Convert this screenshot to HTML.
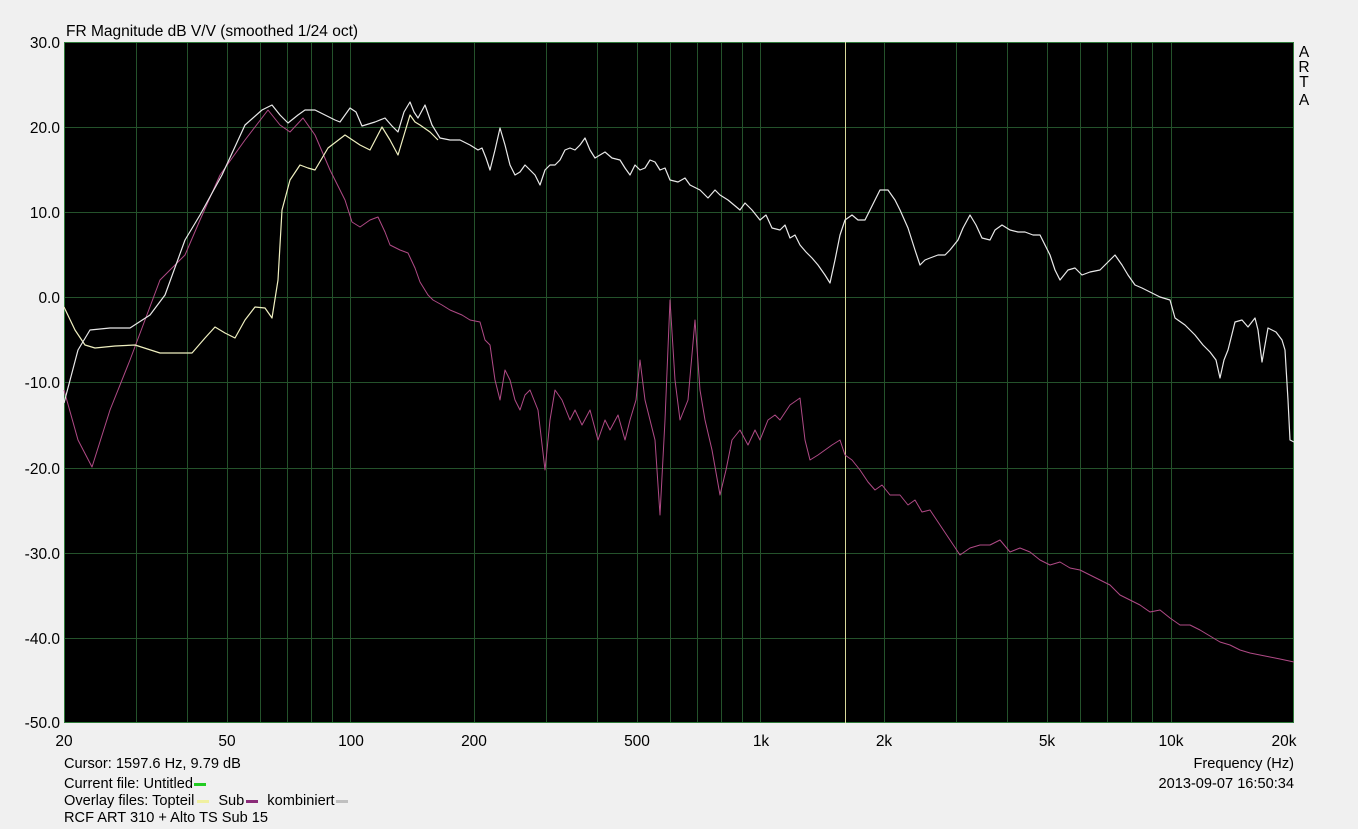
<!DOCTYPE html>
<html><head><meta charset="utf-8"><style>
body{margin:0;background:#f0f0f0;width:1358px;height:829px;overflow:hidden;font-family:"Liberation Sans",sans-serif;}
svg{position:absolute;left:0;top:0}
text{font-family:"Liberation Sans",sans-serif;font-size:15.5px;fill:#000}
.lg{position:absolute;left:64px;font-size:14.6px;line-height:17px;white-space:nowrap;color:#000}
.sw{display:inline-block;width:12px;height:3px;vertical-align:middle;margin:0 2px 0 1px}
</style></head><body>
<svg width="1358" height="829" viewBox="0 0 1358 829">
<rect x="64" y="42" width="1230" height="681" fill="#000"/>
<g stroke="#24522b" stroke-width="1">
<path d="M136.5 42V723M187.5 42V723M227.5 42V723M260.5 42V723M287.5 42V723M311.5 42V723M332.5 42V723M350.5 42V723M474.5 42V723M546.5 42V723M597.5 42V723M637.5 42V723M670.5 42V723M697.5 42V723M721.5 42V723M742.5 42V723M760.5 42V723M884.5 42V723M956.5 42V723M1007.5 42V723M1047.5 42V723M1080.5 42V723M1107.5 42V723M1131.5 42V723M1152.5 42V723M1171.5 42V723"/>
<path d="M64 127.5H1294M64 212.5H1294M64 297.5H1294M64 382.5H1294M64 468.5H1294M64 553.5H1294M64 638.5H1294"/>
</g>
<rect x="64.5" y="42.5" width="1229" height="680" fill="none" stroke="#2f7a3a"/>
<line x1="845.5" y1="42" x2="845.5" y2="723" stroke="#d8d89a"/>
<g fill="none" stroke-width="1" stroke-linejoin="round">
<polyline stroke="#b04a86" points="64,390 78,440 92,467 110,410 130,360 145,320 160,280 175,265 185,255 200,220 220,175 245,140 268,110 280,125 290,132 303,118 315,135 330,170 345,200 352,222 360,227 370,220 378,217 385,232 390,245 400,250 408,253 415,268 420,282 428,295 433,300 442,305 450,310 462,315 470,320 480,322 485,340 490,345 495,380 500,400 505,370 510,380 515,400 520,410 525,395 530,390 538,410 545,470 550,420 555,390 562,400 570,420 575,410 582,425 590,410 598,440 605,420 610,430 618,415 625,440 630,420 636,400 640,360 645,400 650,420 655,440 660,515 665,420 670,300 675,380 680,420 688,400 695,320 700,390 705,420 712,450 720,495 726,470 732,440 740,430 748,445 755,430 760,440 768,420 775,415 780,420 790,405 800,398 805,440 810,460 818,455 825,450 832,445 840,440 845,455 852,460 860,470 868,482 875,490 882,485 890,495 900,495 908,505 915,500 922,512 930,510 940,525 950,540 960,555 970,548 980,545 990,545 1000,540 1010,552 1020,548 1030,552 1040,560 1050,565 1060,562 1070,568 1080,570 1090,575 1100,580 1110,585 1120,595 1130,600 1140,605 1150,612 1160,610 1170,618 1180,625 1190,625 1200,630 1210,636 1220,642 1230,645 1240,650 1250,653 1260,655 1270,657 1280,659 1294,662"/>
<polyline stroke="#f0f0c0" stroke-width="1.2" points="64,307 75,330 85,345 95,348 115,346 135,345 160,353 192,353 205,338 215,327 225,333 235,338 245,320 255,307 265,308 272,318 278,280 282,210 290,180 300,165 308,168 315,170 328,148 345,135 360,145 370,150 382,127 390,140 398,155 404,135 410,115 415,122 420,125 430,132 438,140"/>
<polyline stroke="#e8e8e8" stroke-width="1.2" points="64,403 78,350 90,330 110,328 130,328 150,315 165,295 185,240 200,215 222,175 245,125 262,110 272,105 280,115 288,123 298,115 305,110 315,110 325,115 335,120 340,122 350,108 356,112 362,126 375,122 385,118 392,126 398,132 404,112 410,102 414,112 418,118 425,105 432,125 440,138 450,140 460,140 470,145 478,150 482,148 486,158 490,170 495,150 500,128 505,145 510,165 515,175 520,172 525,165 530,170 535,175 540,185 545,170 550,165 555,165 560,160 565,150 570,148 575,150 580,145 585,138 590,150 595,158 600,155 605,152 612,158 620,160 625,168 630,175 635,165 640,170 645,168 650,160 655,162 660,170 665,168 670,180 678,182 685,178 690,185 700,190 708,198 715,190 720,195 728,200 734,205 740,210 745,203 752,210 760,220 766,215 772,228 780,230 785,225 790,238 795,235 800,245 806,252 812,258 818,265 825,275 830,283 835,260 840,235 845,220 852,215 858,220 865,220 870,210 875,200 880,190 888,190 895,200 900,210 908,228 915,250 920,265 925,260 930,258 938,255 945,255 950,250 958,240 963,228 970,215 976,225 982,238 990,240 995,230 1002,225 1010,230 1018,232 1025,232 1033,235 1040,235 1045,245 1050,255 1055,270 1060,280 1068,270 1075,268 1082,275 1090,272 1100,270 1108,262 1115,255 1122,265 1128,275 1135,285 1142,288 1150,292 1160,297 1170,300 1175,318 1185,325 1195,335 1203,345 1210,352 1216,360 1220,378 1224,360 1228,350 1235,322 1242,320 1248,327 1255,318 1258,330 1262,362 1268,328 1276,332 1282,340 1285,350 1288,400 1290,440 1294,442"/>
</g>
<text x="66" y="36">FR Magnitude dB V/V (smoothed 1/24 oct)</text>
<g text-anchor="end">
<text x="60" y="48">30.0</text><text x="60" y="133">20.0</text><text x="60" y="218">10.0</text><text x="60" y="303">0.0</text><text x="60" y="388">-10.0</text><text x="60" y="474">-20.0</text><text x="60" y="559">-30.0</text><text x="60" y="644">-40.0</text><text x="60" y="728">-50.0</text>
</g>
<g text-anchor="middle">
<text x="64" y="746">20</text><text x="227" y="746">50</text><text x="351" y="746">100</text><text x="474" y="746">200</text><text x="637" y="746">500</text><text x="761" y="746">1k</text><text x="884" y="746">2k</text><text x="1047" y="746">5k</text><text x="1171" y="746">10k</text><text x="1284" y="746">20k</text>
<text x="1304" y="57">A</text><text x="1304" y="72">R</text><text x="1304" y="87">T</text><text x="1304" y="105">A</text>
</g>
<text x="1294" y="768" text-anchor="end" style="font-size:14.6px">Frequency (Hz)</text>
<text x="1294" y="788" text-anchor="end" style="font-size:14.6px">2013-09-07  16:50:34</text>
</svg>
<div class="lg" style="top:756px">Cursor: 1597.6 Hz, 9.79 dB</div>
<div class="lg" style="top:776px">Current file: Untitled<span class="sw" style="background:#22cc22"></span></div>
<div class="lg" style="top:793px">Overlay files: Topteil<span class="sw" style="background:#f0f0a0;margin:0 9px 0 3px"></span>Sub<span class="sw" style="background:#8a2a78;margin:0 9px 0 2px"></span>kombiniert<span class="sw" style="background:#c0c0c0"></span></div>
<div class="lg" style="top:810px">RCF ART 310 + Alto TS Sub 15</div>
</body></html>
